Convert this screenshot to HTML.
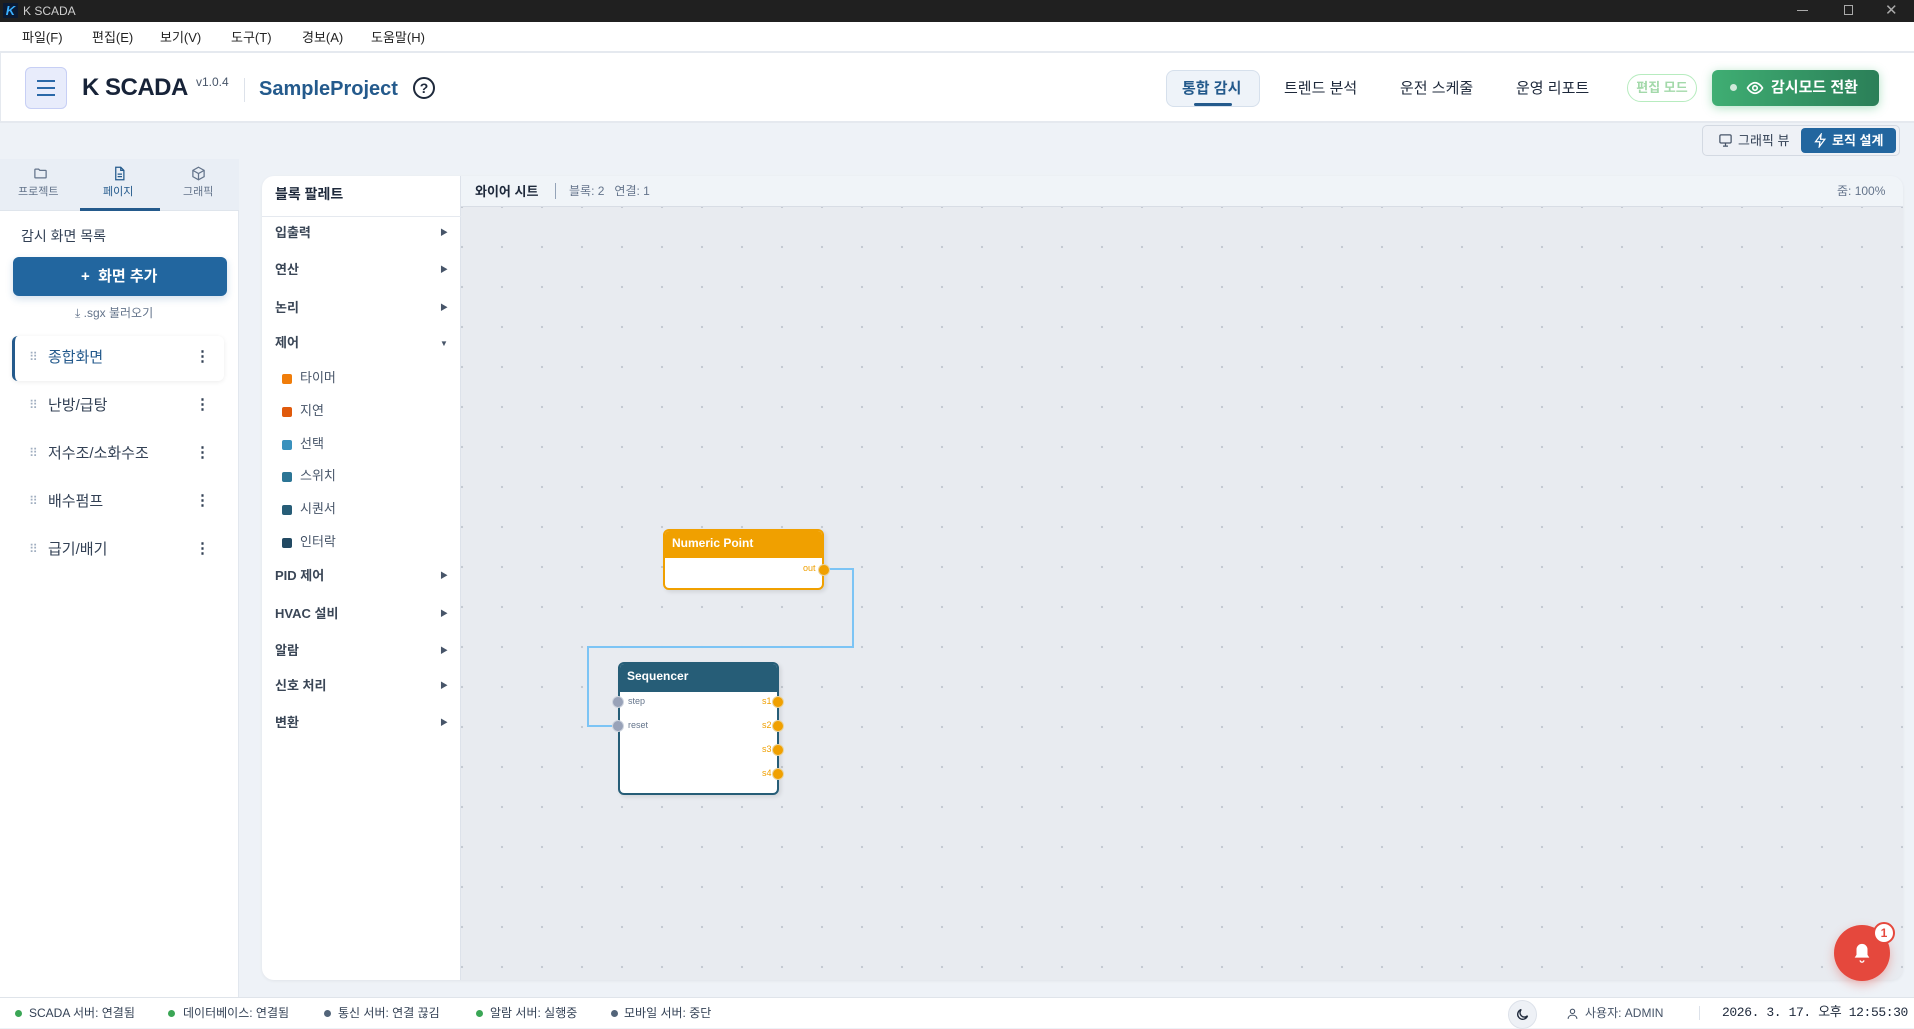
<!DOCTYPE html>
<html><head><meta charset="utf-8">
<style>
*{box-sizing:border-box;margin:0;padding:0}
body{width:1914px;height:1028px;overflow:hidden;position:relative;background:#eef2f7;font-family:"Liberation Sans","Noto Sans CJK KR",sans-serif;color:#1e293b}
.abs{position:absolute}
.t{position:absolute;white-space:nowrap;line-height:1}
</style></head><body>
<!-- title bar -->
<div class="abs" style="left:0;top:0;width:1914px;height:22px;background:#202020"></div>
<div class="abs" style="left:3px;top:3px;width:15px;height:15px;background:#0b1a33;color:#3ab0ff;font:bold 13px 'Liberation Sans';line-height:15px;text-align:center;font-style:italic">K</div>
<div class="t" style="left:23px;top:5px;font-size:12px;color:#cfcfcf">K SCADA</div>
<div class="abs" style="left:1797px;top:10px;width:11px;height:1px;background:#aaa"></div>
<div class="abs" style="left:1844px;top:5px;width:9px;height:10px;border:1px solid #aaa"></div>
<div class="t" style="left:1885px;top:3px;font-size:15px;color:#aaa">✕</div>
<!-- menu -->
<div class="abs" style="left:0;top:22px;width:1914px;height:31px;background:#fff;border-bottom:2px solid #e5e9ef"></div>
<div class="t" style="left:22px;top:31px;font-size:13px;color:#222">파일(F)</div>
<div class="t" style="left:92px;top:31px;font-size:13px;color:#222">편집(E)</div>
<div class="t" style="left:160px;top:31px;font-size:13px;color:#222">보기(V)</div>
<div class="t" style="left:231px;top:31px;font-size:13px;color:#222">도구(T)</div>
<div class="t" style="left:302px;top:31px;font-size:13px;color:#222">경보(A)</div>
<div class="t" style="left:371px;top:31px;font-size:13px;color:#222">도움말(H)</div>
<!-- header -->
<div class="abs" style="left:0;top:53px;width:1914px;height:70px;background:#fff;border-bottom:2px solid #e5e9ef;border-left:1px solid #e5e9ef"></div>
<div class="abs" style="left:25px;top:67px;width:42px;height:42px;background:#e8ecfb;border:1px solid #c7cff5;border-radius:6px"></div>
<div class="abs" style="left:37px;top:80px;width:18px;height:2px;background:#2a68a8;box-shadow:0 7px 0 #2a68a8,0 14px 0 #2a68a8"></div>
<div class="t" style="left:82px;top:76px;font-size:24px;font-weight:bold;color:#172338;letter-spacing:-0.5px">K SCADA</div>
<div class="t" style="left:196px;top:76px;font-size:12px;color:#475569">v1.0.4</div>
<div class="abs" style="left:244px;top:78px;width:1px;height:24px;background:#dde2ea"></div>
<div class="t" style="left:259px;top:79px;font-size:20px;font-weight:bold;color:#245a8c">SampleProject</div>
<div class="abs" style="left:413px;top:77px;width:22px;height:22px;border:2px solid #1e293b;border-radius:50%;font:bold 14px 'Liberation Sans';text-align:center;line-height:18px">?</div>
<div class="abs" style="left:1166px;top:70px;width:94px;height:37px;background:#eef3f9;border:1px solid #d6e0ec;border-radius:8px"></div>
<div class="t" style="left:1182px;top:81px;font-size:15px;color:#245a8c;font-weight:bold">통합 감시</div>
<div class="abs" style="left:1194px;top:103px;width:38px;height:3px;background:#245a8c;border-radius:2px"></div>
<div class="t" style="left:1284px;top:81px;font-size:15px;color:#1e293b">트렌드 분석</div>
<div class="t" style="left:1400px;top:81px;font-size:15px;color:#1e293b">운전 스케줄</div>
<div class="t" style="left:1516px;top:81px;font-size:15px;color:#1e293b">운영 리포트</div>
<div class="abs" style="left:1627px;top:74px;width:70px;height:28px;border:1px solid #b7ecbf;border-radius:14px;color:#a3d9aa;font-size:13px;font-weight:bold;text-align:center;line-height:26px">편집 모드</div>
<div class="abs" style="left:1712px;top:70px;width:167px;height:36px;border-radius:6px;background:linear-gradient(90deg,#3fae73,#2b7f58);box-shadow:0 2px 10px rgba(60,180,110,.4)"></div>
<div class="abs" style="left:1730px;top:84px;width:7px;height:7px;border-radius:50%;background:#cfe9da"></div>
<svg class="abs" style="left:1746px;top:79px" width="18" height="18" viewBox="0 0 24 24" fill="none" stroke="#fff" stroke-width="2.2"><path d="M2 12s4-7 10-7 10 7 10 7-4 7-10 7S2 12 2 12z"/><circle cx="12" cy="12" r="3"/></svg>
<div class="t" style="left:1771px;top:80px;font-size:15px;font-weight:bold;color:#fff">감시모드 전환</div>
<!-- toolbar toggle -->
<div class="abs" style="left:1702px;top:125px;width:198px;height:31px;background:#eef1f6;border:1px solid #d3d9e2;border-radius:5px"></div>
<svg class="abs" style="left:1718px;top:133px" width="15" height="15" viewBox="0 0 24 24" fill="none" stroke="#475569" stroke-width="2"><rect x="3" y="3" width="18" height="13" rx="2"/><path d="M12 16v4M8 21h8"/></svg>
<div class="t" style="left:1738px;top:134px;font-size:13px;color:#334155">그래픽 뷰</div>
<div class="abs" style="left:1801px;top:128px;width:95px;height:25px;background:#22669f;border-radius:4px"></div>
<svg class="abs" style="left:1813px;top:133px" width="15" height="15" viewBox="0 0 24 24" fill="none" stroke="#fff" stroke-width="2"><path d="M13 2L4 14h7l-1 8 9-12h-7z"/></svg>
<div class="t" style="left:1832px;top:134px;font-size:13px;font-weight:bold;color:#fff">로직 설계</div>
<!-- sidebar -->
<div class="abs" style="left:0;top:159px;width:239px;height:838px;background:#fff;border-right:1px solid #e2e7ee"></div>
<div class="abs" style="left:0;top:159px;width:239px;height:52px;background:#e9eef5;border-bottom:1px solid #dfe5ec"></div>
<svg class="abs" style="left:33px;top:166px" width="15" height="15" viewBox="0 0 24 24" fill="none" stroke="#64748b" stroke-width="2"><path d="M3 6a1 1 0 011-1h5l2 2h9a1 1 0 011 1v10a1 1 0 01-1 1H4a1 1 0 01-1-1z"/></svg>
<div class="t" style="left:18px;top:187px;font-size:11px;color:#64748b">프로젝트</div>
<svg class="abs" style="left:112px;top:166px" width="15" height="15" viewBox="0 0 24 24" fill="none" stroke="#245a8c" stroke-width="2"><path d="M6 2h8l5 5v15H6z"/><path d="M14 2v5h5M9 13h7M9 17h7"/></svg>
<div class="t" style="left:103px;top:187px;font-size:11px;color:#245a8c">페이지</div>
<div class="abs" style="left:80px;top:208px;width:80px;height:3px;background:#245a8c"></div>
<svg class="abs" style="left:191px;top:166px" width="15" height="15" viewBox="0 0 24 24" fill="none" stroke="#64748b" stroke-width="2"><path d="M12 2l9 5v10l-9 5-9-5V7z"/><path d="M3 7l9 5 9-5M12 12v10"/></svg>
<div class="t" style="left:183px;top:187px;font-size:11px;color:#64748b">그래픽</div>
<div class="t" style="left:21px;top:229px;font-size:14px;color:#334155">감시 화면 목록</div>
<div class="abs" style="left:13px;top:257px;width:214px;height:39px;background:#22669f;border-radius:6px;box-shadow:0 3px 8px rgba(34,102,159,.2)"></div>
<div class="t" style="left:81px;top:269px;font-size:15px;font-weight:bold;color:#fff">+&nbsp; 화면 추가</div>
<div class="t" style="left:75px;top:307px;font-size:12px;color:#64748b">⤓ .sgx 불러오기</div>
<div class="abs" style="left:12px;top:336px;width:212px;height:45px;background:#fff;border-left:3px solid #245a8c;border-radius:6px;box-shadow:0 1px 5px rgba(0,0,0,.08)"></div>
<div class="t" style="left:29px;top:351px;font-size:12px;color:#a0aec0;letter-spacing:-1px">⠿</div>
<div class="t" style="left:48px;top:350px;font-size:15px;color:#245a8c">종합화면</div>
<div class="t" style="left:195px;top:349px;font-size:15px;color:#334155;font-weight:bold">⋮</div>
<div class="t" style="left:29px;top:399px;font-size:12px;color:#a0aec0">⠿</div>
<div class="t" style="left:48px;top:398px;font-size:15px;color:#334155">난방/급탕</div>
<div class="t" style="left:195px;top:397px;font-size:15px;color:#334155;font-weight:bold">⋮</div>
<div class="t" style="left:29px;top:447px;font-size:12px;color:#a0aec0">⠿</div>
<div class="t" style="left:48px;top:446px;font-size:15px;color:#334155">저수조/소화수조</div>
<div class="t" style="left:195px;top:445px;font-size:15px;color:#334155;font-weight:bold">⋮</div>
<div class="t" style="left:29px;top:495px;font-size:12px;color:#a0aec0">⠿</div>
<div class="t" style="left:48px;top:494px;font-size:15px;color:#334155">배수펌프</div>
<div class="t" style="left:195px;top:493px;font-size:15px;color:#334155;font-weight:bold">⋮</div>
<div class="t" style="left:29px;top:543px;font-size:12px;color:#a0aec0">⠿</div>
<div class="t" style="left:48px;top:542px;font-size:15px;color:#334155">급기/배기</div>
<div class="t" style="left:195px;top:541px;font-size:15px;color:#334155;font-weight:bold">⋮</div>
<!-- palette + canvas container -->
<div class="abs" style="left:262px;top:176px;width:1641px;height:804px;background:#e8ebf0;border-radius:12px;overflow:hidden;box-shadow:0 1px 3px rgba(0,0,0,.06)">
  <div class="abs" style="left:0;top:0;width:199px;height:804px;background:#fff;border-right:1px solid #dde2ea"></div>
  <div class="abs" style="left:0;top:40px;width:199px;height:1px;background:#e5e9ef"></div>
  <div class="abs" style="left:199px;top:0;width:1442px;height:31px;background:#f0f4f8;border-bottom:1px solid #d8dde5"></div>
  <div class="abs" style="left:199px;top:31px;width:1442px;height:773px;background-image:radial-gradient(circle,#c2c8d0 1px,transparent 1.3px);background-size:40px 40px;background-position:-19px -20px"></div>
</div>
<div class="t" style="left:275px;top:187px;font-size:14px;font-weight:bold;color:#1e293b">블록 팔레트</div>
<div class="t" style="left:275px;top:226px;font-size:13px;font-weight:bold;color:#3a4656">입출력</div>
<div class="t" style="left:275px;top:263px;font-size:13px;font-weight:bold;color:#3a4656">연산</div>
<div class="t" style="left:275px;top:301px;font-size:13px;font-weight:bold;color:#3a4656">논리</div>
<div class="t" style="left:275px;top:336px;font-size:13px;font-weight:bold;color:#3a4656">제어</div>
<div class="t" style="left:275px;top:569px;font-size:13px;font-weight:bold;color:#3a4656">PID 제어</div>
<div class="t" style="left:275px;top:607px;font-size:13px;font-weight:bold;color:#3a4656">HVAC 설비</div>
<div class="t" style="left:275px;top:644px;font-size:13px;font-weight:bold;color:#3a4656">알람</div>
<div class="t" style="left:275px;top:679px;font-size:13px;font-weight:bold;color:#3a4656">신호 처리</div>
<div class="t" style="left:275px;top:716px;font-size:13px;font-weight:bold;color:#3a4656">변환</div>
<div class="t" style="left:440px;top:229px;font-size:8px;color:#475569">▶</div>
<div class="t" style="left:440px;top:266px;font-size:8px;color:#475569">▶</div>
<div class="t" style="left:440px;top:304px;font-size:8px;color:#475569">▶</div>
<div class="t" style="left:440px;top:340px;font-size:8px;color:#475569">▼</div>
<div class="t" style="left:440px;top:572px;font-size:8px;color:#475569">▶</div>
<div class="t" style="left:440px;top:610px;font-size:8px;color:#475569">▶</div>
<div class="t" style="left:440px;top:647px;font-size:8px;color:#475569">▶</div>
<div class="t" style="left:440px;top:682px;font-size:8px;color:#475569">▶</div>
<div class="t" style="left:440px;top:719px;font-size:8px;color:#475569">▶</div>
<div class="abs" style="left:282px;top:374px;width:10px;height:10px;border-radius:2px;background:#f07d0a"></div>
<div class="t" style="left:300px;top:371px;font-size:13px;color:#475569">타이머</div>
<div class="abs" style="left:282px;top:407px;width:10px;height:10px;border-radius:2px;background:#e05a0c"></div>
<div class="t" style="left:300px;top:404px;font-size:13px;color:#475569">지연</div>
<div class="abs" style="left:282px;top:440px;width:10px;height:10px;border-radius:2px;background:#3a91bd"></div>
<div class="t" style="left:300px;top:437px;font-size:13px;color:#475569">선택</div>
<div class="abs" style="left:282px;top:472px;width:10px;height:10px;border-radius:2px;background:#2c7595"></div>
<div class="t" style="left:300px;top:469px;font-size:13px;color:#475569">스위치</div>
<div class="abs" style="left:282px;top:505px;width:10px;height:10px;border-radius:2px;background:#275d77"></div>
<div class="t" style="left:300px;top:502px;font-size:13px;color:#475569">시퀀서</div>
<div class="abs" style="left:282px;top:538px;width:10px;height:10px;border-radius:2px;background:#224a63"></div>
<div class="t" style="left:300px;top:535px;font-size:13px;color:#475569">인터락</div>
<div class="t" style="left:475px;top:185px;font-size:13px;font-weight:bold;color:#1e293b">와이어 시트</div>
<div class="abs" style="left:555px;top:183px;width:1px;height:16px;background:#94a3b8"></div>
<div class="t" style="left:569px;top:185px;font-size:12px;color:#64748b">블록: 2 &nbsp;&nbsp;연결: 1</div>
<div class="t" style="left:1837px;top:185px;font-size:12px;color:#64748b">줌: 100%</div>
<!-- wire -->
<svg class="abs" style="left:0;top:0" width="1914" height="1028"><path d="M824 569H853V647H588V726H618" fill="none" stroke="#7cc4f5" stroke-width="2"/></svg>
<!-- Numeric Point -->
<div class="abs" style="left:663px;top:529px;width:161px;height:61px;background:#fff;border:2px solid #f0a000;border-radius:6px;overflow:hidden;box-shadow:2px 2px 4px rgba(0,0,0,.1)"><div style="height:27px;background:#f0a000;color:#fff;font-weight:bold;font-size:12px;padding:5px 7px">Numeric Point</div></div>
<div class="t" style="left:803px;top:564px;font-size:9px;color:#f0a000">out</div>
<div class="abs" style="left:818px;top:564px;width:12px;height:12px;border-radius:50%;background:#f0a000;border:1px solid #e8d3a0"></div>
<!-- Sequencer -->
<div class="abs" style="left:618px;top:662px;width:161px;height:133px;background:#fff;border:2px solid #265d77;border-radius:6px;overflow:hidden;box-shadow:2px 2px 4px rgba(0,0,0,.1)"><div style="height:28px;background:#265d77;color:#fff;font-weight:bold;font-size:12px;padding:5px 7px">Sequencer</div></div>
<div class="abs" style="left:612px;top:696px;width:12px;height:12px;border-radius:50%;background:#98a2b8;border:1px solid #cfd5df"></div>
<div class="abs" style="left:612px;top:720px;width:12px;height:12px;border-radius:50%;background:#98a2b8;border:1px solid #cfd5df"></div>
<div class="t" style="left:628px;top:697px;font-size:9px;color:#64748b">step</div>
<div class="t" style="left:628px;top:721px;font-size:9px;color:#64748b">reset</div>
<div class="t" style="left:762px;top:697px;font-size:9px;color:#f0a000">s1</div>
<div class="t" style="left:762px;top:721px;font-size:9px;color:#f0a000">s2</div>
<div class="t" style="left:762px;top:745px;font-size:9px;color:#f0a000">s3</div>
<div class="t" style="left:762px;top:769px;font-size:9px;color:#f0a000">s4</div>
<div class="abs" style="left:772px;top:696px;width:12px;height:12px;border-radius:50%;background:#f0a000;border:1px solid #e8d3a0"></div>
<div class="abs" style="left:772px;top:720px;width:12px;height:12px;border-radius:50%;background:#f0a000;border:1px solid #e8d3a0"></div>
<div class="abs" style="left:772px;top:744px;width:12px;height:12px;border-radius:50%;background:#f0a000;border:1px solid #e8d3a0"></div>
<div class="abs" style="left:772px;top:768px;width:12px;height:12px;border-radius:50%;background:#f0a000;border:1px solid #e8d3a0"></div>
<!-- bell -->
<div class="abs" style="left:1834px;top:925px;width:56px;height:56px;border-radius:50%;background:#e5483d;box-shadow:0 4px 10px rgba(229,72,61,.35)"></div>
<svg class="abs" style="left:1851px;top:942px" width="22" height="22" viewBox="0 0 24 24" fill="#fff"><path d="M12 2a6 6 0 00-6 6v6l-2 3h16l-2-3V8a6 6 0 00-6-6z"/><path d="M10 20a2 2 0 004 0" fill="none" stroke="#fff" stroke-width="1.5"/></svg>
<div class="abs" style="left:1873px;top:922px;width:22px;height:22px;border-radius:50%;background:#fff;border:2px solid #e5483d;color:#e5483d;font:bold 12px 'Liberation Sans';text-align:center;line-height:18px">1</div>
<!-- status bar -->
<div class="abs" style="left:0;top:997px;width:1914px;height:31px;background:#fff;border-top:1px solid #dfe4ea"></div>
<div class="abs" style="left:15px;top:1010px;width:7px;height:7px;border-radius:50%;background:#3aa655"></div>
<div class="t" style="left:29px;top:1007px;font-size:12px;color:#334155">SCADA 서버: 연결됨</div>
<div class="abs" style="left:168px;top:1010px;width:7px;height:7px;border-radius:50%;background:#3aa655"></div>
<div class="t" style="left:183px;top:1007px;font-size:12px;color:#334155">데이터베이스: 연결됨</div>
<div class="abs" style="left:324px;top:1010px;width:7px;height:7px;border-radius:50%;background:#526479"></div>
<div class="t" style="left:338px;top:1007px;font-size:12px;color:#334155">통신 서버: 연결 끊김</div>
<div class="abs" style="left:476px;top:1010px;width:7px;height:7px;border-radius:50%;background:#3aa655"></div>
<div class="t" style="left:490px;top:1007px;font-size:12px;color:#334155">알람 서버: 실행중</div>
<div class="abs" style="left:611px;top:1010px;width:7px;height:7px;border-radius:50%;background:#526479"></div>
<div class="t" style="left:624px;top:1007px;font-size:12px;color:#334155">모바일 서버: 중단</div>
<div class="abs" style="left:1508px;top:1000px;width:29px;height:29px;border-radius:50%;background:#eef1f6;border:1px solid #dde2ea"></div>
<svg class="abs" style="left:1515px;top:1007px" width="15" height="15" viewBox="0 0 24 24" fill="none" stroke="#1e293b" stroke-width="2.2"><path d="M20 14A8 8 0 1110 4a7 7 0 0010 10z"/></svg>
<svg class="abs" style="left:1566px;top:1007px" width="13" height="13" viewBox="0 0 24 24" fill="none" stroke="#475569" stroke-width="2"><circle cx="12" cy="8" r="4"/><path d="M4 22c0-5 4-7 8-7s8 2 8 7"/></svg>
<div class="t" style="left:1585px;top:1007px;font-size:12px;color:#475569">사용자: ADMIN</div>
<div class="abs" style="left:1699px;top:1006px;width:1px;height:14px;background:#dde2ea"></div>
<div class="t" style="left:1722px;top:1006px;font-size:13px;color:#1e293b;font-family:'Liberation Mono','Noto Sans CJK KR',monospace;letter-spacing:-0.4px">2026. 3. 17. 오후 12:55:30</div>
</body></html>
